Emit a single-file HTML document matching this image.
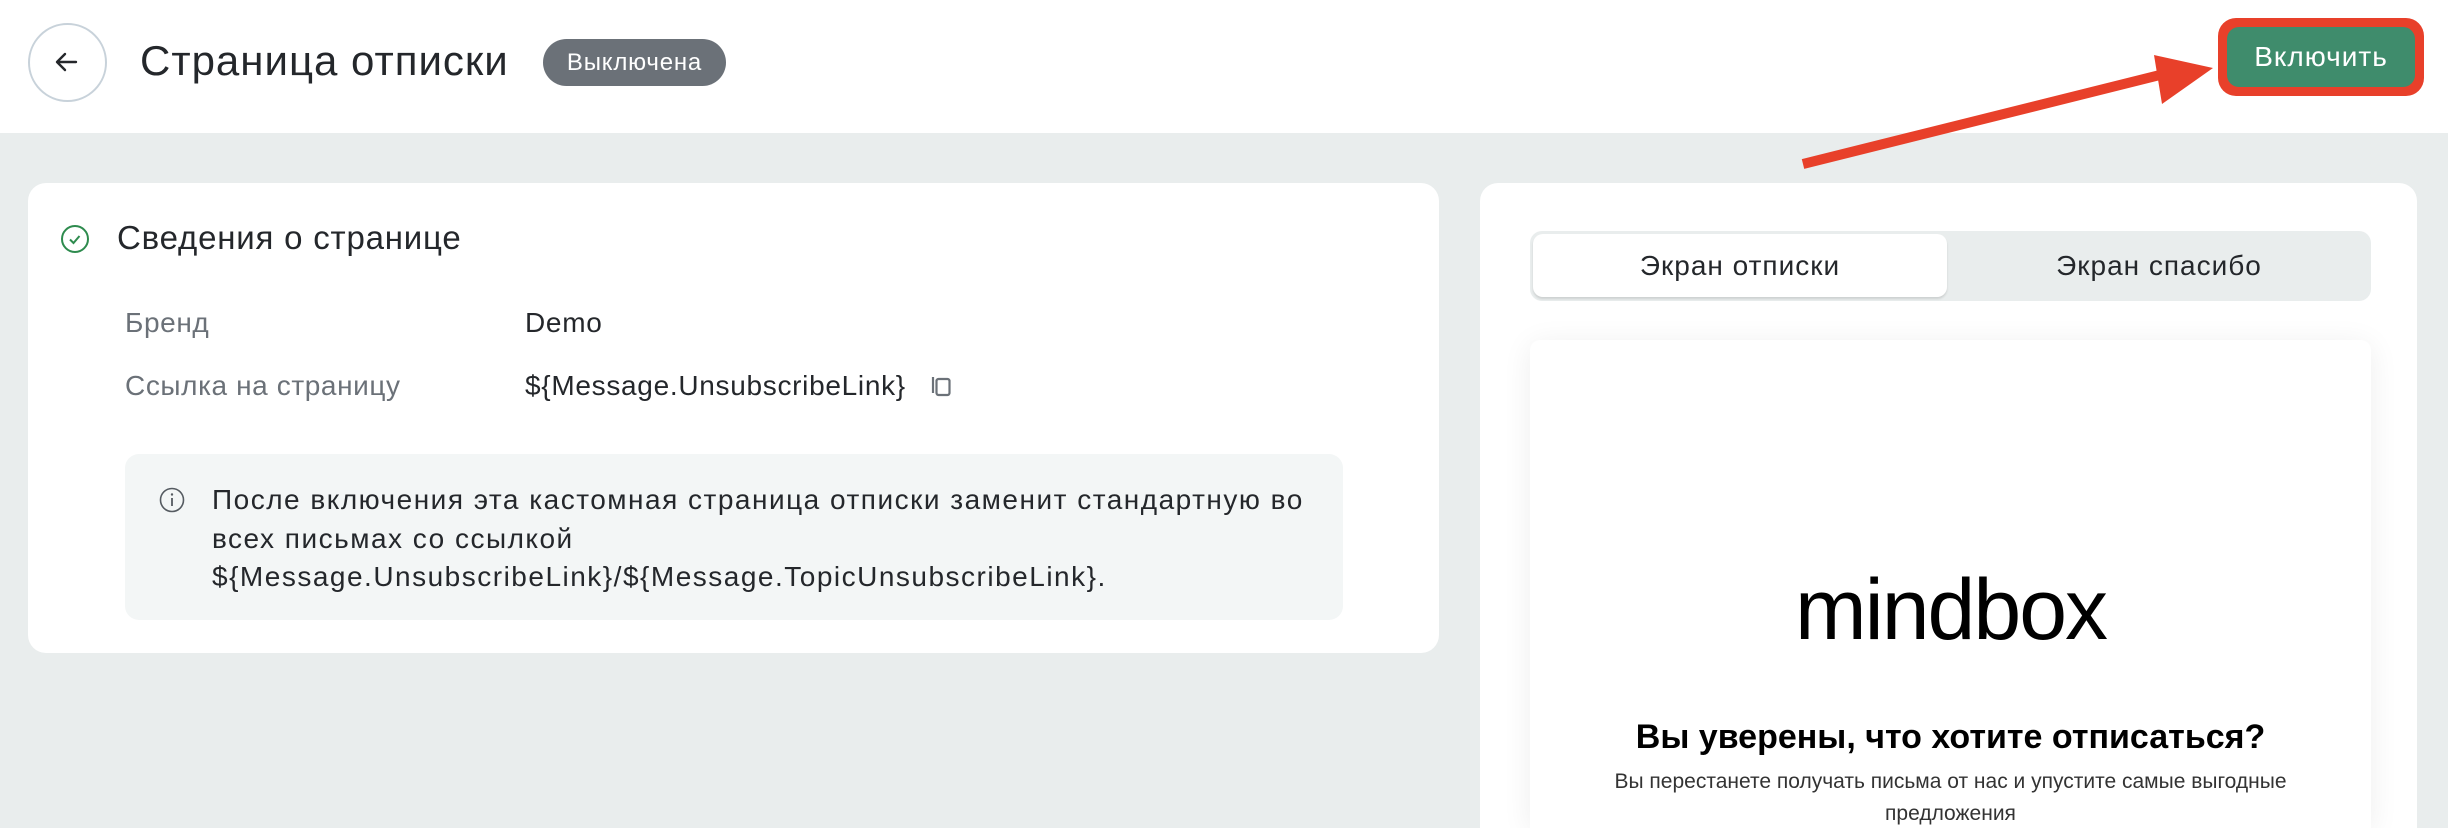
<!DOCTYPE html>
<html style="overflow:hidden;width:2448px;height:828px"><head><meta charset="utf-8"><style>
*{box-sizing:border-box;margin:0;padding:0}
body{width:2448px;height:828px;overflow:hidden;background:#e9eded;font-family:"Liberation Sans",sans-serif;position:relative;color:#24272b}
.hdr{position:absolute;left:0;top:0;width:2448px;height:133px;background:#fff}
.abs{position:absolute;white-space:nowrap}
.card{position:absolute;background:#fff;border-radius:18px}
.lbl{position:absolute;font-size:28px;letter-spacing:0.6px;color:#6b7178;line-height:30px;white-space:nowrap}
.val{position:absolute;font-size:28px;letter-spacing:0.7px;color:#24272b;line-height:30px;white-space:nowrap}
</style></head><body>
<div class="hdr"></div>
<div class="abs" style="left:28px;top:23px;width:79px;height:79px;border:2px solid #c8d2da;border-radius:50%"></div>
<svg class="abs" style="left:52px;top:47px" width="30" height="30" viewBox="0 0 30 30"><path d="M24 15H6M13 7l-8 8 8 8" fill="none" stroke="#24272b" stroke-width="2.4" stroke-linecap="round" stroke-linejoin="round"/></svg>
<div class="abs" style="left:140px;top:37px;font-size:42px;letter-spacing:1px;line-height:48px;color:#24272b">Страница отписки</div>
<div class="abs" style="left:543px;top:39px;width:183px;height:47px;border-radius:24px;background:#6b7178;color:#fff;font-size:24px;letter-spacing:0.8px;line-height:47px;text-align:center">Выключена</div>
<div class="abs" style="left:2218px;top:18px;width:206px;height:78px;border-radius:18px;background:#e8402a"></div>
<div class="abs" style="left:2227px;top:27px;width:188px;height:60px;border-radius:12px;background:#3f8c6c;color:#fff;font-size:28px;letter-spacing:1px;line-height:60px;text-align:center">Включить</div>
<svg class="abs" style="left:0;top:0" width="2448" height="200"><line x1="1803" y1="164" x2="2160" y2="75" stroke="#e8402a" stroke-width="10"/><polygon points="2154,55 2213,68 2162,104" fill="#e8402a"/></svg>

<div class="card" style="left:28px;top:183px;width:1411px;height:470px"></div>
<svg class="abs" style="left:60px;top:224px" width="30" height="30" viewBox="0 0 30 30"><circle cx="15" cy="15" r="13" fill="none" stroke="#2e8b4e" stroke-width="2"/><path d="M10 15.5l3.5 3.5 6-7" fill="none" stroke="#2e8b4e" stroke-width="2"/></svg>
<div class="abs" style="left:117px;top:220px;font-size:33px;letter-spacing:0.8px;line-height:36px">Сведения о странице</div>
<div class="lbl" style="left:125px;top:308px">Бренд</div>
<div class="val" style="left:525px;top:308px">Demo</div>
<div class="lbl" style="left:125px;top:371px">Ссылка на страницу</div>
<div class="val" style="left:525px;top:371px">${Message.UnsubscribeLink}</div>
<svg class="abs" style="left:930px;top:373px" width="24" height="26" viewBox="0 0 24 26"><path d="M3 20V4" stroke="#6b7178" stroke-width="2.2" fill="none"/><rect x="6.5" y="6" width="13" height="16" rx="2" fill="none" stroke="#6b7178" stroke-width="2.2"/></svg>
<div class="abs" style="left:125px;top:454px;width:1218px;height:166px;background:#f3f6f6;border-radius:14px"></div>
<svg class="abs" style="left:159px;top:487px" width="26" height="26" viewBox="0 0 26 26"><circle cx="13" cy="13" r="11.5" fill="none" stroke="#555b61" stroke-width="1.6"/><path d="M13 11v8" stroke="#555b61" stroke-width="1.8"/><circle cx="13" cy="7.5" r="1.2" fill="#555b61"/></svg>
<div class="abs" style="left:212px;top:481px;font-size:28px;letter-spacing:1.5px;line-height:38.5px;color:#24272b">После включения эта кастомная страница отписки заменит стандартную во<br>всех письмах со ссылкой<br>${Message.UnsubscribeLink}/${Message.TopicUnsubscribeLink}.</div>

<div class="card" style="left:1480px;top:183px;width:937px;height:645px;border-bottom-left-radius:0;border-bottom-right-radius:0"></div>
<div class="abs" style="left:1530px;top:231px;width:841px;height:70px;background:#e9eded;border-radius:12px"></div>
<div class="abs" style="left:1533px;top:234px;width:414px;height:63px;background:#fff;border-radius:10px;box-shadow:0 2px 2px rgba(0,0,0,.12)"></div>
<div class="abs" style="left:1533px;top:234px;width:414px;height:63px;line-height:63px;text-align:center;font-size:28px;letter-spacing:1px">Экран отписки</div>
<div class="abs" style="left:1950px;top:234px;width:418px;height:63px;line-height:63px;text-align:center;font-size:28px;letter-spacing:1px">Экран спасибо</div>
<div class="abs" style="left:1530px;top:340px;width:841px;height:488px;background:#fff;border-radius:10px 10px 0 0;box-shadow:0 4px 30px rgba(0,0,0,.07)"></div>
<div class="abs" style="left:1530px;top:560px;width:841px;text-align:center;font-size:86px;line-height:100px;color:#000;letter-spacing:-2px">mindbox</div>
<div class="abs" style="left:1530px;top:717px;width:841px;text-align:center;font-size:34px;line-height:40px;font-weight:bold;color:#000">Вы уверены, что хотите отписаться?</div>
<div class="abs" style="left:1530px;top:766px;width:841px;text-align:center;font-size:21px;line-height:32px;color:#333">Вы перестанете получать письма от нас и упустите самые выгодные<br>предложения</div>
</body></html>
